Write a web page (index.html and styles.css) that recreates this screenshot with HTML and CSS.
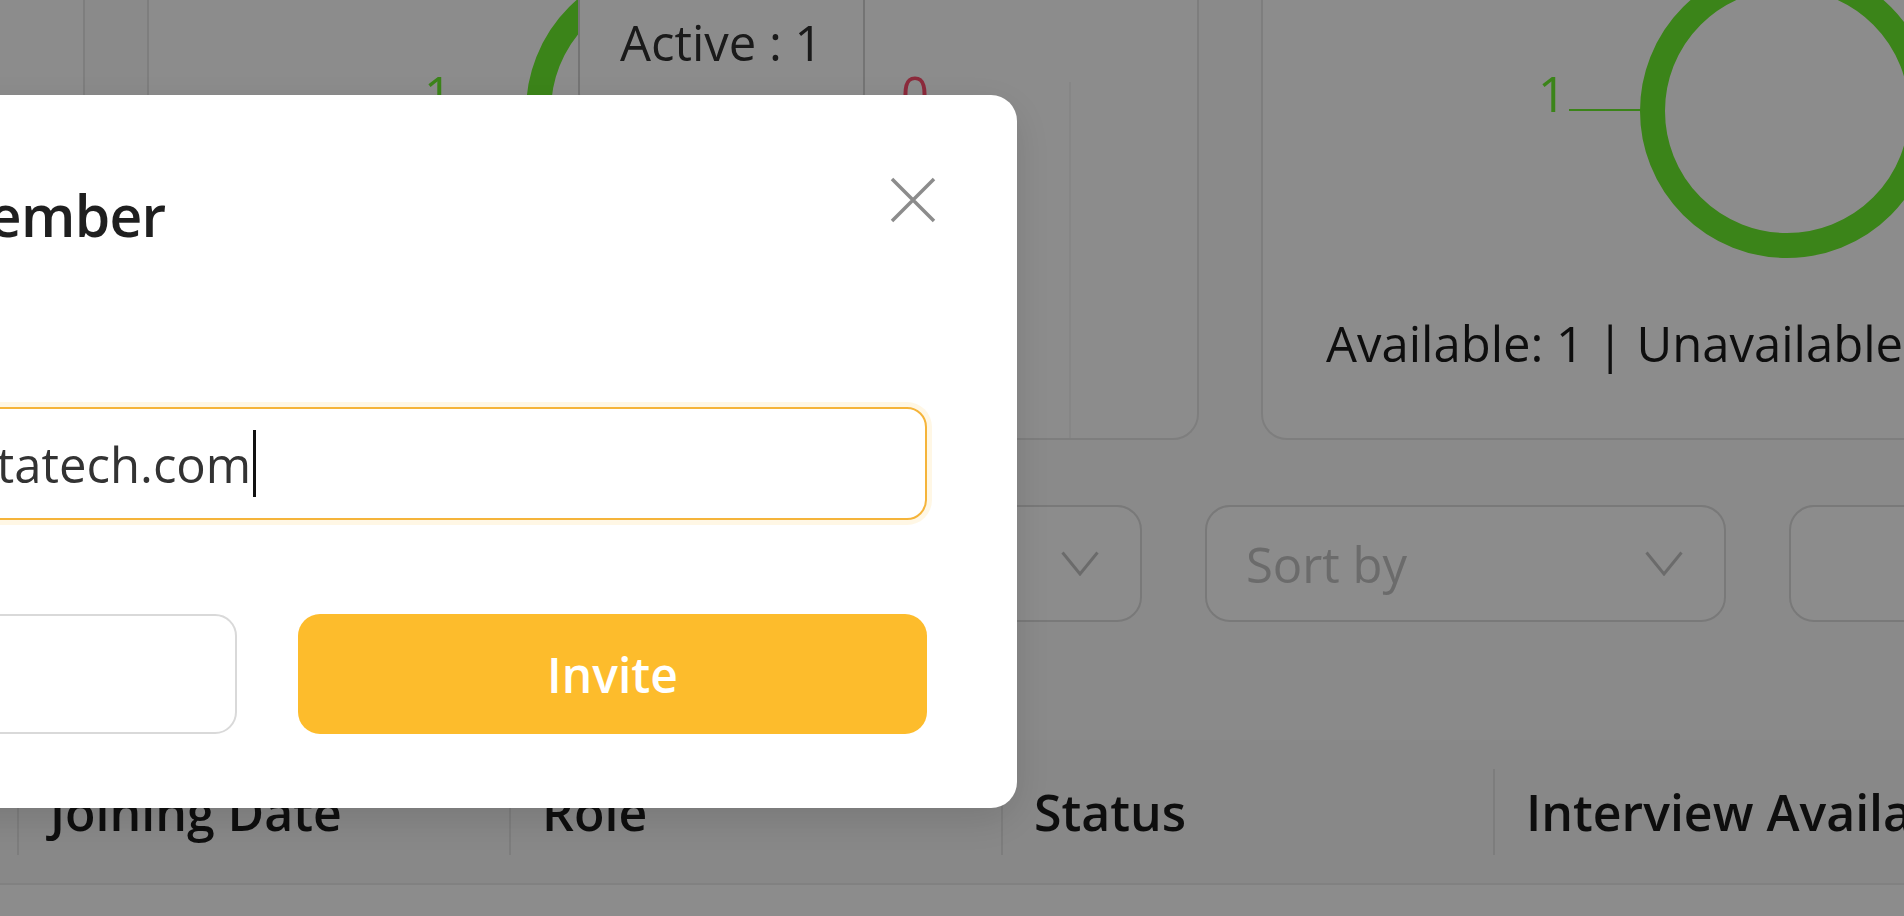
FILE: index.html
```html
<!DOCTYPE html>
<html lang="en">
<head>
<meta charset="utf-8">
<title>Team Members</title>
<link rel="stylesheet" href="styles.css">
</head>
<body>
<main class="page">
  <section class="stats">
    <article class="card">
      <svg class="chart" width="1048" height="380" viewBox="0 0 1048 380">
        <circle cx="524" cy="209" r="134.5" fill="none" stroke="#5b8ff9" stroke-width="25"/>
      </svg>
      <p class="card-caption">Total Members: 1</p>
    </article>
    <article class="card card-split">
      <svg class="chart" width="1048" height="380" viewBox="0 0 1048 380">
        <circle cx="524" cy="209" r="134.5" fill="none" stroke="#6cf02e" stroke-width="25"/>
        <line x1="306" y1="208" x2="378" y2="208" stroke="#6cf02e" stroke-width="2"/>
        <text class="chart-label label-green" x="303" y="210" text-anchor="end">1</text>
        <line x1="671" y1="208" x2="748" y2="208" stroke="#ff4d6d" stroke-width="2"/>
        <text class="chart-label label-red" x="752" y="210">0</text>
      </svg>
      <div class="tooltip">Active : 1</div>
      <p class="card-caption">Active: 1 | Inactive: 0</p>
    </article>
    <article class="card">
      <svg class="chart" width="1048" height="380" viewBox="0 0 1048 380">
        <circle cx="524" cy="209" r="134.5" fill="none" stroke="#6cf02e" stroke-width="25"/>
        <line x1="306" y1="208" x2="378" y2="208" stroke="#6cf02e" stroke-width="2"/>
        <text class="chart-label label-green" x="303" y="210" text-anchor="end">1</text>
      </svg>
      <p class="card-caption">Available: 1 | Unavailable: 0</p>
    </article>
  </section>

  <section class="filters">
    <div class="search"><span>Search members</span></div>
    <div class="select"><span>Role</span><svg class="chevron" width="38" height="25" viewBox="0 0 38 25"><polyline points="1.5,1.5 19,23 36.5,1.5" fill="none" stroke="currentColor" stroke-width="3"/></svg></div>
    <div class="select"><span>Sort by</span><svg class="chevron" width="38" height="25" viewBox="0 0 38 25"><polyline points="1.5,1.5 19,23 36.5,1.5" fill="none" stroke="currentColor" stroke-width="3"/></svg></div>
    <div class="select select-wide"><span>Status</span><svg class="chevron" width="38" height="25" viewBox="0 0 38 25"><polyline points="1.5,1.5 19,23 36.5,1.5" fill="none" stroke="currentColor" stroke-width="3"/></svg></div>
  </section>

  <section class="table">
    <div class="thead">
      <div class="th">Name</div>
      <div class="th">Email</div>
      <div class="th">Joining Date</div>
      <div class="th">Role</div>
      <div class="th">Status</div>
      <div class="th">Interview Availability</div>
      <div class="th">Actions</div>
    </div>
    <div class="trow">
      <div class="td">Admin</div>
      <div class="td">admin@betatech.com</div>
      <div class="td">12 Jan 2024</div>
      <div class="td">Admin</div>
      <div class="td">Active</div>
      <div class="td">Available</div>
      <div class="td"></div>
    </div>
  </section>
</main>

<div class="mask"></div>

<div class="modal" role="dialog" aria-labelledby="modal-title">
  <h2 class="modal-title" id="modal-title">Invite Team Member</h2>
  <button class="modal-close" type="button" aria-label="Close">
    <svg width="48" height="46" viewBox="0 0 48 46"><path d="M3 2 L45 44 M45 2 L3 44" stroke="currentColor" stroke-width="3.5" fill="none"/></svg>
  </button>
  <div class="field" role="textbox">hr.recruiter@betatech.com<span class="caret"></span></div>
  <div class="actions">
    <button class="btn btn-cancel" type="button">Cancel</button>
    <button class="btn btn-invite" type="button">Invite</button>
  </div>
</div>
</body>
</html>
```

FILE: styles.css
```css
* {
  box-sizing: border-box;
}

html,
body {
  margin: 0;
  height: 100%;
  overflow: hidden;
}

body {
  background: #fbfbfb;
  font-family: "Open Sans", "Noto Sans", "Liberation Sans", sans-serif;
  font-size: 49px;
  line-height: 68px;
  color: #262626;
}

/* ---------- underlying page (scrolled / zoomed) ---------- */
.page {
  width: 3600px;
  margin: -100px 0 0 -967px;
}

.stats {
  display: grid;
  grid-template-columns: repeat(3, 1052px);
  column-gap: 62px;
}

.card {
  position: relative;
  height: 540px;
  background: #fff;
  border: 2px solid #e6e6e6;
  border-radius: 26px;
}

.card-split::after {
  content: "";
  position: absolute;
  top: 180px;
  bottom: 0;
  left: 920px;
  width: 2px;
  background: #f5f5f5;
}

.chart {
  display: block;
}

.chart-label {
  font-family: "Open Sans", "Noto Sans", sans-serif;
  font-size: 49px;
}

.label-green {
  fill: #6cf02e;
}

.label-red {
  fill: #ff4d6d;
}

.card-caption {
  margin: 27px 0 0;
  padding-left: 63px;
  color: #1a1a1a;
  white-space: nowrap;
}

.tooltip {
  position: absolute;
  left: 429px;
  top: 80px;
  padding: 24px 40px;
  background: #fff;
  border: 2px solid #d4d4d4;
  border-radius: 8px;
  color: #303030;
  white-space: nowrap;
}

.filters {
  display: flex;
  gap: 63px;
  margin-top: 65px;
}

.search,
.select {
  height: 117px;
  background: #fff;
  border: 2px solid #dcdcdc;
  border-radius: 25px;
}

.search {
  width: 1525px;
  display: flex;
  align-items: center;
  padding-left: 40px;
  color: #bfbfbf;
}

.select {
  width: 521px;
  flex: none;
  display: flex;
  align-items: center;
  justify-content: space-between;
  padding: 0 41px 0 39px;
  color: #c4c4c4;
}

.select-wide {
  width: 760px;
  padding-left: 300px;
}

.chevron {
  display: block;
  color: #c4c4c4;
}

.table {
  margin-top: 118px;
  background: #fff;
  border-radius: 26px 26px 0 0;
}

.thead,
.trow {
  display: grid;
  grid-template-columns: repeat(7, 492px);
}

.thead {
  height: 145px;
  background: #f8f8f8;
  border-bottom: 2px solid #ececec;
  border-radius: 26px 26px 0 0;
}

.th {
  position: relative;
  display: flex;
  align-items: center;
  padding-left: 33px;
  font-size: 50px;
  font-weight: 600;
  color: #1a1a1a;
  white-space: nowrap;
}

.th + .th::before {
  content: "";
  position: absolute;
  left: 0;
  top: 50%;
  width: 2px;
  height: 86px;
  transform: translateY(-50%);
  background: #e4e4e4;
}

.trow {
  height: 160px;
}

.td {
  display: flex;
  align-items: center;
  padding-left: 33px;
  white-space: nowrap;
}

/* ---------- modal ---------- */
.mask {
  position: fixed;
  inset: 0;
  background: rgba(0, 0, 0, 0.45);
}

.modal {
  position: fixed;
  top: 95px;
  left: -482px;
  width: 1499px;
  padding: 80px 90px 74px;
  background: #fff;
  border-radius: 26px;
  box-shadow: 0 12px 40px rgba(0, 0, 0, 0.12);
}

.modal-title {
  margin: 0;
  font-size: 57px;
  line-height: 80px;
  font-weight: 600;
  letter-spacing: -0.7px;
  color: #1f1f1f;
  white-space: nowrap;
}

.modal-close {
  position: absolute;
  top: 82px;
  right: 80px;
  width: 48px;
  height: 46px;
  padding: 0;
  border: 0;
  background: none;
  color: #8c8c8c;
}

.modal-close svg {
  display: block;
}

.field {
  margin-top: 152px;
  height: 113px;
  display: flex;
  align-items: center;
  padding: 0 24px;
  border: 2px solid #f5b43a;
  border-radius: 20px;
  box-shadow: 0 0 0 5px rgba(253, 188, 44, 0.12);
  color: #333;
  white-space: nowrap;
  overflow: hidden;
}

.caret {
  display: inline-block;
  width: 3px;
  height: 67px;
  margin-left: 2px;
  background: #111;
}

.actions {
  display: grid;
  grid-template-columns: 1fr 1fr;
  column-gap: 61px;
  margin-top: 94px;
}

.btn {
  height: 120px;
  border-radius: 22px;
  font-family: "Open Sans", "Noto Sans", sans-serif;
  font-size: 48px;
  font-weight: 600;
}

.btn-cancel {
  padding-left: 12px;
  background: #fff;
  border: 2px solid #d9d9d9;
  color: #bfbfbf;
}

.btn-invite {
  background: #fdbc2c;
  border: 0;
  color: #fff;
}
```
